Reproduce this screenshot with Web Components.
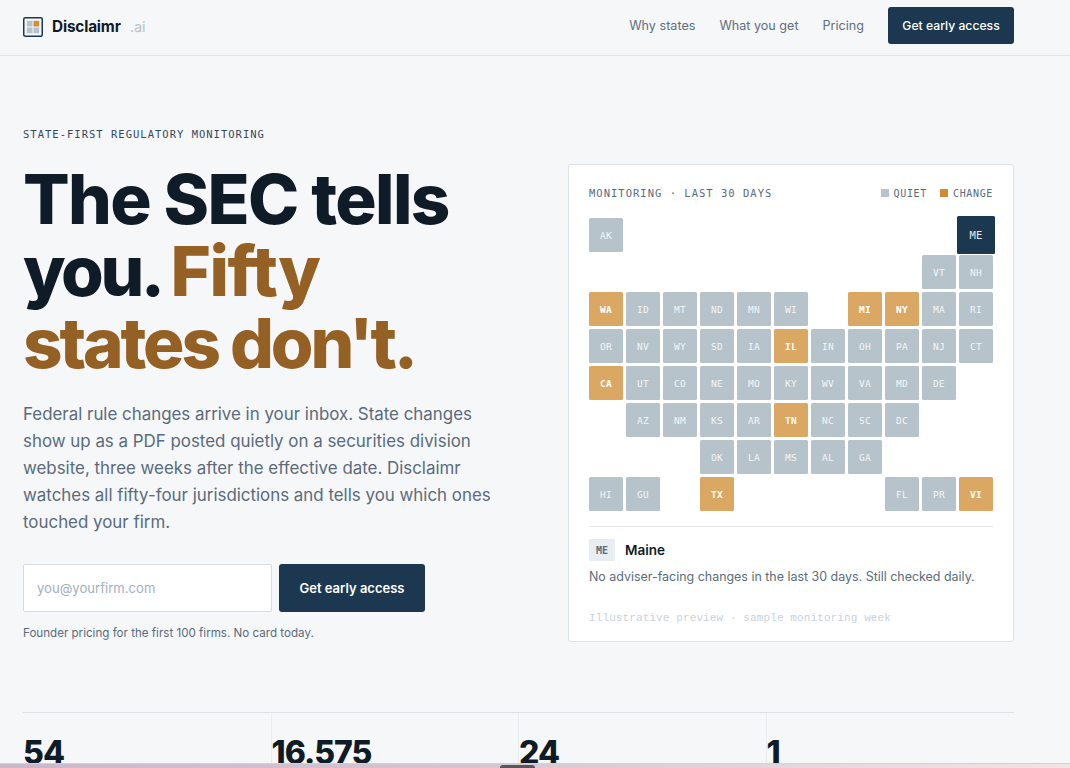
<!DOCTYPE html>
<html lang="en">
<head>
<meta charset="utf-8">
<title>Disclaimr.ai</title>
<style>
  html, body { margin: 0; padding: 0; height: 100%; overflow: hidden; background: #f6f7f9; }
  body { font-family: Inter, "Liberation Sans", sans-serif; color: #0f1b26; }
</style>
</head>
<body>
<site-nav></site-nav>
<hero-section>
  <hero-copy></hero-copy>
  <monitor-card></monitor-card>
</hero-section>
<stat-row>
  <stat-cell value="54"></stat-cell>
  <stat-cell value="16.575"></stat-cell>
  <stat-cell value="24"></stat-cell>
  <stat-cell value="1"></stat-cell>
</stat-row>
<dock-strip></dock-strip>

<script>
class SiteNav extends HTMLElement {
  constructor() {
    super();
    this.attachShadow({mode: "open"});
  }
  connectedCallback() {
    this.shadowRoot.innerHTML = `
    <style>
      * { box-sizing: border-box; margin: 0; padding: 0; }
      :host { display: block; box-sizing: border-box; height: 56px; border-bottom: 1px solid #e0e4e8; }
      .bar { height: 55px; padding: 7px 56px 11px 23px; display: flex; align-items: center; justify-content: space-between; }
      .brand { display: flex; align-items: center; margin-top: 2px; }
      svg { width: 20px; height: 20px; display: block; margin-right: 9px; }
      .name { font-size: 15.3px; font-weight: 700; letter-spacing: -0.01em; color: #0f1b26; }
      .tld { font-size: 14.5px; color: #b8c4cc; margin-left: 9px; }
      .links { display: flex; align-items: center; gap: 24px; font-size: 12.6px; color: #5f6f7e; }
      .cta { height: 37px; width: 126px; display: flex; align-items: center; justify-content: center; background: #1c3850; color: #fff; border-radius: 3px; font-size: 12.2px; font-weight: 500; }
    </style>
    <div class="bar">
      <div class="brand">
        <svg viewBox="0 0 20 20">
          <rect x="0.75" y="0.75" width="18.5" height="18.5" rx="1.5" fill="#f6f7f9" stroke="#1c3850" stroke-width="1.5"/>
          <rect x="3.8" y="3.8" width="5.7" height="5.7" fill="#b6c3cb"/>
          <rect x="10.5" y="3.8" width="5.7" height="5.7" fill="#d18c35"/>
          <rect x="3.8" y="10.5" width="5.7" height="5.7" fill="#b6c3cb"/>
          <rect x="10.5" y="10.5" width="5.7" height="5.7" fill="#b6c3cb"/>
        </svg>
        <span class="name">Disclaimr</span><span class="tld">.ai</span>
      </div>
      <div class="links">
        <span>Why states</span>
        <span>What you get</span>
        <span>Pricing</span>
        <span class="cta">Get early access</span>
      </div>
    </div>`;
  }
}

class HeroSection extends HTMLElement {
  constructor() {
    super();
    this.attachShadow({mode: "open"});
  }
  connectedCallback() {
    this.shadowRoot.innerHTML = `
    <style>
      :host { display: grid; grid-template-columns: 1fr 446px; column-gap: 24px; padding: 71px 56px 0 23px; height: 656px; box-sizing: border-box; align-items: start; }
    </style>
    <slot></slot>`;
  }
}

class HeroCopy extends HTMLElement {
  constructor() {
    super();
    this.attachShadow({mode: "open"});
  }
  connectedCallback() {
    this.shadowRoot.innerHTML = `
    <style>
      * { box-sizing: border-box; margin: 0; padding: 0; }
      :host { display: block; }
      .eyebrow { font-family: "DejaVu Sans Mono", monospace; font-size: 10.5px; letter-spacing: 1.01px; line-height: 14px; color: #34495c; }
      h1 { margin-top: 22px; font-size: 69px; line-height: 72px; font-weight: 800; letter-spacing: -0.035em; color: #0f1b26; }
      h1 span { display: block; white-space: nowrap; }
      h1 .l1 { letter-spacing: -1.62px; }
      h1 .l3 { letter-spacing: -3.1px; }
      h1 b { font-weight: inherit; letter-spacing: -3.4px; }
      h1 em { font-style: normal; color: #946024; }
      h1 .fifty { letter-spacing: -1.4px; }
      p.lead { margin-top: 22px; font-size: 16.9px; line-height: 27px; color: #5a6b7b; width: 490px; }
      signup-form { margin-top: 28px; }
    </style>
    <div class="eyebrow">STATE-FIRST REGULATORY MONITORING</div>
    <h1><span class="l1">The SEC tells</span><span><b>you. </b><em class="fifty">Fifty</em></span><span class="l3"><em>states don't.</em></span></h1>
    <p class="lead">Federal rule changes arrive in your inbox. State changes show up as a PDF posted quietly on a securities division website, three weeks after the effective date. Disclaimr watches all fifty-four jurisdictions and tells you which ones touched your firm.</p>
    <signup-form></signup-form>`;
  }
}

class SignupForm extends HTMLElement {
  constructor() {
    super();
    this.attachShadow({mode: "open"});
  }
  connectedCallback() {
    this.shadowRoot.innerHTML = `
    <style>
      * { box-sizing: border-box; margin: 0; padding: 0; }
      :host { display: block; }
      .row { display: flex; gap: 7px; }
      input { width: 249px; height: 48px; padding: 0 13px; background: #fff; border: 1px solid #d5dde3; border-radius: 2px; font: 400 13.1px Inter, sans-serif; color: #0f1b26; outline: none; }
      input::placeholder { color: #a3b1bc; opacity: 1; }
      button { width: 146px; height: 48px; background: #1c3850; border: 0; border-radius: 3px; color: #fff; font: 600 13px Inter, sans-serif; }
      small { display: block; margin-top: 14px; font-size: 11.6px; line-height: 15px; color: #5a6b7b; }
    </style>
    <div class="row">
      <input type="email" placeholder="you@yourfirm.com">
      <button type="button">Get early access</button>
    </div>
    <small>Founder pricing for the first 100 firms. No card today.</small>`;
  }
}

class StateTile extends HTMLElement {
  constructor() {
    super();
    this.attachShadow({mode: "open"});
  }
  connectedCallback() {
    const kind = this.getAttribute("kind") || "quiet";
    this.shadowRoot.innerHTML = `
    <style>
      :host { display: block; position: relative; }
      .tile { width: 34px; height: 34px; display: flex; align-items: center; justify-content: center; border-radius: 1.5px; font-family: "DejaVu Sans Mono", monospace; font-size: 9.5px; letter-spacing: 0.2px; }
      .quiet { background: #b6c3cb; color: #f4f6f7; }
      .change { background: #dba863; color: #fff; font-weight: 700; }
      .active { background: #1c3850; color: #e6ecf0; width: 38px; height: 38px; position: absolute; left: -2px; top: -2px; font-size: 10.5px; }
    </style>
    <div class="tile ${kind}">${this.getAttribute("code")}</div>`;
  }
}

// col, row from the tile-map layout
const STATES = [
  ["AK",0,0],["ME",10,0,"active"],
  ["VT",9,1],["NH",10,1],
  ["WA",0,2,"change"],["ID",1,2],["MT",2,2],["ND",3,2],["MN",4,2],["WI",5,2],["MI",7,2,"change"],["NY",8,2,"change"],["MA",9,2],["RI",10,2],
  ["OR",0,3],["NV",1,3],["WY",2,3],["SD",3,3],["IA",4,3],["IL",5,3,"change"],["IN",6,3],["OH",7,3],["PA",8,3],["NJ",9,3],["CT",10,3],
  ["CA",0,4,"change"],["UT",1,4],["CO",2,4],["NE",3,4],["MO",4,4],["KY",5,4],["WV",6,4],["VA",7,4],["MD",8,4],["DE",9,4],
  ["AZ",1,5],["NM",2,5],["KS",3,5],["AR",4,5],["TN",5,5,"change"],["NC",6,5],["SC",7,5],["DC",8,5],
  ["OK",3,6],["LA",4,6],["MS",5,6],["AL",6,6],["GA",7,6],
  ["HI",0,7],["GU",1,7],["TX",3,7,"change"],["FL",8,7],["PR",9,7],["VI",10,7,"change"]
];

class MonitorCard extends HTMLElement {
  constructor() {
    super();
    this.attachShadow({mode: "open"});
  }
  tiles() {
    return STATES.map(s => `<state-tile code="${s[0]}" kind="${s[3] || "quiet"}" style="grid-column:${s[1] + 1};grid-row:${s[2] + 1}"></state-tile>`).join("");
  }
  connectedCallback() {
    this.shadowRoot.innerHTML = `
    <style>
      * { box-sizing: border-box; margin: 0; padding: 0; }
      :host { display: block; box-sizing: border-box; margin-top: 37px; height: 478px; background: #fff; border: 1px solid #dde3e9; border-radius: 3px; padding: 21px 20px 0; }
      .head { display: flex; justify-content: space-between; align-items: center; height: 14px; font-family: "DejaVu Sans Mono", monospace; font-size: 10.5px; letter-spacing: 1.01px; color: #5a6b7b; }
      .legend { display: flex; gap: 13px; font-size: 10px; letter-spacing: 0.65px; }
      .legend span { display: flex; align-items: center; gap: 5px; }
      .legend i { width: 8px; height: 8px; display: block; background: #b6c3cb; }
      .legend i.c { background: #d18c35; }
      .map { margin-top: 18px; display: grid; grid-template-columns: repeat(11, 34px); grid-template-rows: repeat(8, 34px); gap: 3px; }
      .detail { margin-top: 15px; border-top: 1px solid #e6eaee; padding-top: 12px; }
      .who { display: flex; align-items: center; gap: 10px; }
      .badge { width: 26px; height: 22px; background: #e8edf1; border-radius: 1.5px; display: flex; align-items: center; justify-content: center; font-family: "DejaVu Sans Mono", monospace; font-size: 10px; font-weight: 700; color: #5a6b7b; }
      .state { font-size: 13.5px; font-weight: 600; color: #0f1b26; }
      .note { margin-top: 6px; font-size: 12.45px; line-height: 20px; color: #5a6b7b; }
      .fine { margin-top: 24px; font-family: "Liberation Mono", monospace; font-size: 11px; line-height: 14px; letter-spacing: 0.11px; color: #c8d2da; }
    </style>
    <div class="head">
      <div>MONITORING · LAST 30 DAYS</div>
      <div class="legend"><span><i></i>QUIET</span><span><i class="c"></i>CHANGE</span></div>
    </div>
    <div class="map">${this.tiles()}</div>
    <div class="detail">
      <div class="who"><span class="badge">ME</span><span class="state">Maine</span></div>
      <div class="note">No adviser-facing changes in the last 30 days. Still checked daily.</div>
      <div class="fine">Illustrative preview · sample monitoring week</div>
    </div>`;
  }
}

class StatRow extends HTMLElement {
  constructor() {
    super();
    this.attachShadow({mode: "open"});
  }
  connectedCallback() {
    this.shadowRoot.innerHTML = `
    <style>
      :host { display: grid; grid-template-columns: repeat(4, 247.5px); margin: 0 56px 0 23px; border-top: 1px solid #dbe2e4; height: 60px; }
    </style>
    <slot></slot>`;
  }
}

class StatCell extends HTMLElement {
  constructor() {
    super();
    this.attachShadow({mode: "open"});
  }
  connectedCallback() {
    this.shadowRoot.innerHTML = `
    <style>
      :host { display: block; padding-top: 24px; border-left: 1px solid #e9edf0; }
      :host(:first-child) { border-left: 0; }
      div { font-size: 32px; line-height: 32px; font-weight: 800; letter-spacing: -0.03em; color: #0f1b26; }
    </style>
    <div>${this.getAttribute("value")}</div>`;
  }
}

class DockStrip extends HTMLElement {
  constructor() {
    super();
    this.attachShadow({mode: "open"});
  }
  connectedCallback() {
    this.shadowRoot.innerHTML = `
    <style>
      :host { display: block; position: fixed; left: 0; right: 0; bottom: 0; height: 5px; background: linear-gradient(90deg, #c9b8cb 0%, #d6c6d0 45%, #f2e4e4 100%); border-top: 1px solid #cfd3d6; box-sizing: border-box; }
      i { position: absolute; left: 500px; top: 1px; width: 35px; height: 3px; background: #55585c; border-radius: 3px 3px 0 0; }
    </style>
    <i></i>`;
  }
}

customElements.define("site-nav", SiteNav);
customElements.define("hero-section", HeroSection);
customElements.define("hero-copy", HeroCopy);
customElements.define("signup-form", SignupForm);
customElements.define("state-tile", StateTile);
customElements.define("monitor-card", MonitorCard);
customElements.define("stat-row", StatRow);
customElements.define("stat-cell", StatCell);
customElements.define("dock-strip", DockStrip);
</script>
</body>
</html>
